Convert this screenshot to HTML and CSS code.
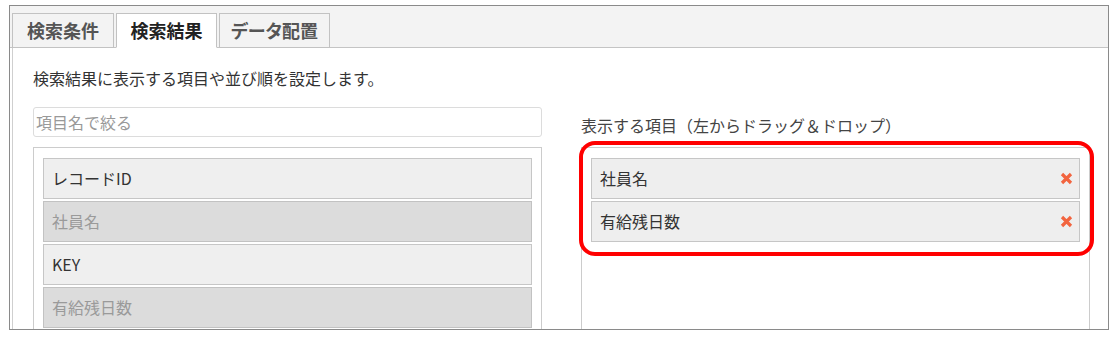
FILE: index.html
```html
<!DOCTYPE html>
<html lang="ja">
<head>
<meta charset="utf-8">
<title>検索結果</title>
<link rel="stylesheet" href="styles.css">
</head>
<body>
<div class="frame">
  <div class="tabbar">
    <div class="tab tab-1">検索条件</div>
    <div class="tab tab-2 active">検索結果</div>
    <div class="tab tab-3">データ配置</div>
  </div>
  <div class="panel">
    <p class="desc">検索結果に表示する項目や並び順を設定します。</p>
    <div class="cols">
      <div class="col">
        <input class="filter" type="text" placeholder="項目名で絞る">
        <div class="list">
          <div class="item">レコードID</div>
          <div class="item disabled">社員名</div>
          <div class="item">KEY</div>
          <div class="item disabled">有給残日数</div>
        </div>
      </div>
      <div class="col">
        <div class="label">表示する項目（左からドラッグ＆ドロップ）</div>
        <div class="list list-right">
          <div class="item sel"><span>社員名</span><svg class="x" viewBox="0 0 13 13" width="13" height="13"><path d="M2 2L11 11M11 2L2 11" stroke="#f2643f" stroke-width="3.2" stroke-linecap="butt"/></svg></div>
          <div class="item sel"><span>有給残日数</span><svg class="x" viewBox="0 0 13 13" width="13" height="13"><path d="M2 2L11 11M11 2L2 11" stroke="#f2643f" stroke-width="3.2" stroke-linecap="butt"/></svg></div>
        </div>
      </div>
    </div>
  </div>
</div>
<div class="highlight"></div>
</body>
</html>
```
FILE: styles.css
```css
html, body {
  margin: 0;
  padding: 0;
  background: #ffffff;
}
body {
  font-family: "Noto Sans CJK JP", "Noto Sans", sans-serif;
  color: #333;
  width: 1118px;
  height: 339px;
  overflow: hidden;
  position: relative;
}
.frame {
  margin: 5px 0 0 9px;
  width: 1098px;
  height: 323px;
  border: 1px solid #8a8a8a;
  overflow: hidden;
  background: #fff;
}
.tabbar {
  display: flex;
  gap: 2px;
  padding: 7px 0 0 2px;
  background: #f3f3f3;
  border-bottom: 1px solid #c4c4c4;
  height: 34px;
}
.tab {
  box-sizing: border-box;
  height: 35px;
  margin-bottom: -1px;
  border: 1px solid #c2c2c2;
  background: #f3f3f3;
  font-size: 18px;
  font-weight: bold;
  line-height: 33px;
  text-align: center;
  color: #555;
}
.tab-1 { width: 102px; }
.tab-2 { width: 101px; }
.tab-3 { width: 111px; font-feature-settings: "palt"; }
.tab.active {
  background: #fff;
  border-bottom-color: #fff;
  color: #222;
}
.panel {
  margin-left: 2px;
  border-left: 1px solid #cfcfcf;
  padding: 18px 0 0 20px;
  height: 300px;
}
.desc {
  margin: 0 0 17px 0;
  font-size: 16px;
  line-height: 24px;
  color: #333;
}
.cols {
  display: flex;
  gap: 39px;
}
.col {
  width: 509px;
  flex: none;
}
.filter {
  display: block;
  box-sizing: border-box;
  width: 509px;
  height: 30px;
  margin: 0;
  border: 1px solid #dcdcdc;
  border-radius: 3px;
  padding: 0 2px;
  font-family: "Noto Sans CJK JP", "Noto Sans", sans-serif;
  font-size: 16px;
  color: #333;
  background: #fff;
  outline: none;
}
.filter::placeholder {
  color: #999;
}
.list {
  margin-top: 10px;
  border: 1px solid #cccccc;
  padding: 10px 9px;
  height: 260px;
}
.item {
  box-sizing: border-box;
  height: 41px;
  margin-bottom: 2px;
  border: 1px solid #c6c6c6;
  background: #efefef;
  padding: 0 8px;
  font-size: 16px;
  line-height: 39px;
  color: #333;
}
.item.disabled {
  background: #dcdcdc;
  color: #9a9a9a;
  border-color: #c2c2c2;
}
.label {
  height: 30px;
  box-sizing: border-box;
  padding-top: 6px;
  font-size: 16px;
  line-height: 24px;
  color: #444;
}
.item.sel {
  display: flex;
  align-items: center;
  justify-content: space-between;
  background: #eeeeee;
  padding-right: 6px;
}
.x {
  display: block;
  flex: none;
}
.highlight {
  position: absolute;
  left: 579px;
  top: 141px;
  width: 507px;
  height: 107px;
  border: 4px solid #ff0000;
  border-radius: 16px;
}
```
